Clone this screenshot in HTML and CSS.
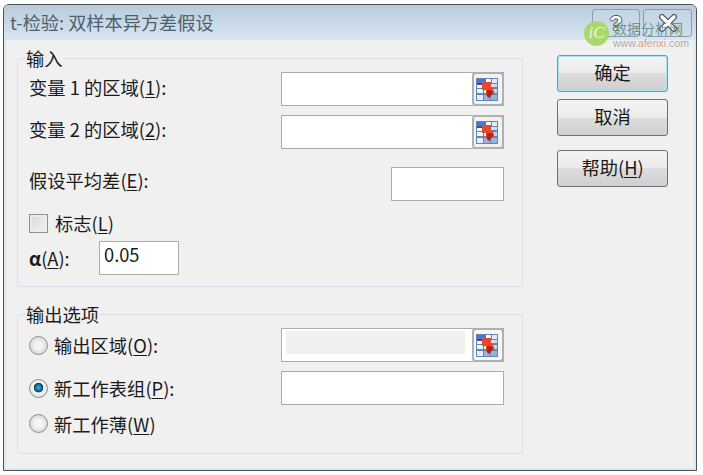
FILE: index.html
```html
<!DOCTYPE html>
<html lang="zh-CN">
<head>
    <meta charset="UTF-8">
    <title>t-检验: 双样本异方差假设</title>
    <link rel="stylesheet" href="styles.css">
</head>
<body>
    <svg class="defs" width="0" height="0">
        <symbol id="range-icon" viewBox="0 0 22 23">
            <rect x="0" y="0" width="22" height="23" fill="#6484b3"/>
            <rect x="1" y="1" width="9" height="4" fill="#4279d6"/>
            <rect x="10" y="1" width="5" height="4" fill="#f6f9fd"/>
            <rect x="16" y="1" width="5" height="4" fill="#e2ecf8"/>
            <rect x="1" y="5" width="6" height="2" fill="#46566e"/>
            <rect x="1" y="7" width="6" height="3" fill="#f2f6fb"/>
            <rect x="8" y="6" width="6" height="4" fill="#f2f6fb"/>
            <rect x="15" y="6" width="6" height="3" fill="#d3e0f1"/>
            <rect x="1" y="11" width="6" height="4" fill="#f2f6fb"/>
            <rect x="8" y="11" width="6" height="4" fill="#e8eff8"/>
            <rect x="15" y="11" width="6" height="4" fill="#c3d5ec"/>
            <rect x="1" y="17" width="6" height="5" fill="#e6eef8"/>
            <rect x="8" y="17" width="6" height="5" fill="#95b4e2"/>
            <rect x="15" y="17" width="6" height="5" fill="#95b4e2"/>
            <path d="M6 4h9v6h2l1 4-5 6-3-3v-5H6z" fill="#e4482f"/>
            <path d="M11 12h3l4 2-5 6-2-2z" fill="#bb2112"/>
        </symbol>
    </svg>

    <div class="dialog">
        <div class="titlebar">
            <span class="title">t-检验: 双样本异方差假设</span>
            <div class="title-btns">
                <span class="title-btn help">?</span>
                <span class="title-btn close">
                    <svg width="20" height="18" viewBox="0 0 20 18">
                        <path d="M4 3l12 12M16 3L4 15" stroke="#4a5560" stroke-width="6" stroke-linecap="round"/>
                        <path d="M4 3l12 12M16 3L4 15" stroke="#fff" stroke-width="3.6" stroke-linecap="round"/>
                    </svg>
                </span>
            </div>
        </div>

        <div class="content">
            <div class="left">
                <fieldset class="group group-input">
                    <legend>输入</legend>
                    <div class="row">
                        <label class="label lift-s">变量 1 的区域(<u>1</u>):</label>
                        <div class="input input-ref">
                            <button class="ref-btn"><svg width="22" height="23"><use href="#range-icon"/></svg></button>
                        </div>
                    </div>
                    <div class="row gap-s">
                        <label class="label lift-m">变量 2 的区域(<u>2</u>):</label>
                        <div class="input input-ref">
                            <button class="ref-btn"><svg width="22" height="23"><use href="#range-icon"/></svg></button>
                        </div>
                    </div>
                    <div class="row gap-l">
                        <label class="label lift-l">假设平均差(<u>E</u>):</label>
                        <div class="input input-short"></div>
                    </div>
                    <div class="row-check">
                        <span class="checkbox"></span>
                        <label>标志(<u>L</u>)</label>
                    </div>
                    <div class="row gap-s">
                        <label class="label label-alpha"><b>α</b>(<u>A</u>):</label>
                        <div class="input input-alpha">0.05</div>
                    </div>
                </fieldset>

                <fieldset class="group group-output">
                    <legend>输出选项</legend>
                    <div class="row">
                        <span class="radio"></span>
                        <label class="label label-radio">输出区域(<u>O</u>):</label>
                        <div class="input input-ref">
                            <div class="disabled-fill"></div>
                            <button class="ref-btn ref-btn-flat"><svg width="22" height="23"><use href="#range-icon"/></svg></button>
                        </div>
                    </div>
                    <div class="row gap-s">
                        <span class="radio checked"></span>
                        <label class="label label-radio">新工作表组(<u>P</u>):</label>
                        <div class="input"></div>
                    </div>
                    <div class="row-last">
                        <span class="radio"></span>
                        <label class="label-radio">新工作薄(<u>W</u>)</label>
                    </div>
                </fieldset>
            </div>

            <div class="actions">
                <button class="btn btn-default">确定</button>
                <button class="btn">取消</button>
                <button class="btn btn-help">帮助(<u>H</u>)</button>
            </div>
        </div>

        <!-- 水印 -->
        <div class="watermark">
            <span class="wm-logo">iC</span>
            <div class="wm-text">
                <span class="wm-name">数据分析网</span>
                <span class="wm-url">www.<b>afenxi</b>.com</span>
            </div>
        </div>
    </div>
</body>
</html>
```

FILE: styles.css
```css
html, body {
    margin: 0;
    padding: 0;
    background-color: #fff;
}

body {
    font-family: "Noto Sans CJK SC", "Liberation Sans", sans-serif;
    font-size: 18.3px;
    color: #1a1a1a;
}

.defs {
    display: block;
    height: 0;
}

u {
    text-underline-offset: 2px;
}

.dialog {
    position: relative;
    box-sizing: border-box;
    width: 694px;
    height: 467px;
    margin: 4px 0 0 3px;
    border: 1px solid #4f5255;
    border-radius: 6px 6px 0 0;
    background-color: #f0f0f0;
    overflow: hidden;
}

/* 标题栏 */
.titlebar {
    display: flex;
    justify-content: space-between;
    box-sizing: border-box;
    height: 35px;
    padding: 4px 4px 0 6px;
    background: linear-gradient(#b9cadb, #d9e6f1);
}

.title {
    font-size: 18.2px;
    line-height: 27px;
    color: #4e5f6c;
}

.title-btns {
    display: flex;
    gap: 3px;
    height: 28px;
}

.title-btn {
    display: flex;
    align-items: center;
    justify-content: center;
    box-sizing: border-box;
    width: 48px;
    height: 28px;
    border: 1px solid #8a9cae;
    border-radius: 3px;
    background: linear-gradient(#c5d4e2, #cfdeeb);
}

.close {
    width: 49px;
}

.help {
    font-family: "Liberation Sans", sans-serif;
    font-size: 21px;
    font-weight: bold;
    color: #fff;
    text-shadow: -1px 0 #4a5560, 1px 0 #4a5560, 0 -1px #4a5560, 0 1px #4a5560;
}

/* 主体 */
.content {
    display: flex;
    box-sizing: border-box;
    height: 430px;
    padding: 9px 0 0 11px;
    border: solid #dbe7f2;
    border-width: 0 2px 2px;
}

.left {
    flex-shrink: 0;
    width: 506px;
}

.group {
    box-sizing: border-box;
    margin: 0;
    padding: 5px 0 0 11px;
    min-width: 0;
    border: 1px solid #d8e0e8;
    border-radius: 3px;
}

.group-input {
    height: 238px;
}

.group-output {
    height: 149px;
    margin-top: 18px;
}

legend {
    margin-left: -3px;
    padding: 0;
    line-height: 18px;
}

.row {
    display: flex;
    align-items: center;
    height: 34px;
}

.gap-s {
    margin-top: 9px;
}

.gap-l {
    margin-top: 18px;
}

.label {
    width: 252px;
    flex-shrink: 0;
    line-height: 22px;
}

.lift-s {
    margin-bottom: 5px;
}

.lift-m {
    margin-bottom: 6px;
}

.lift-l {
    margin-bottom: 8px;
}

.label-alpha {
    width: 70px;
}

.label-radio {
    display: block;
    width: 227px;
    flex-shrink: 0;
    margin-left: 6px;
    line-height: 22px;
}

.input {
    box-sizing: border-box;
    width: 223px;
    height: 34px;
    border: 1px solid #aaadb0;
    background-color: #fff;
}

.input-ref {
    display: flex;
    justify-content: flex-end;
}

.input-short {
    width: 113px;
    margin-left: 110px;
}

.input-alpha {
    width: 80px;
    padding: 0 0 0 4px;
    line-height: 24px;
}

.disabled-fill {
    width: 179px;
    height: 23px;
    margin: 2px 7px 0 0;
    background-color: #f0f0f0;
}

.ref-btn {
    display: flex;
    align-items: center;
    justify-content: center;
    box-sizing: border-box;
    width: 32px;
    height: 34px;
    margin: -1px -1px 0 0;
    padding: 0 2px 0 0;
    border: 2px solid #aeb0b3;
    border-radius: 4px;
    background-color: #f2f2f2;
}

.ref-btn-flat {
    background-color: #f7f7f7;
}

.row-check {
    display: flex;
    align-items: center;
    gap: 7px;
    height: 18px;
    margin-top: 13px;
}

.checkbox {
    box-sizing: border-box;
    width: 19px;
    height: 19px;
    border: 1px solid #8e8f8f;
    background: linear-gradient(135deg, #d9d9d9, #f3f3f3);
    box-shadow: inset 0 0 0 2px #ececec;
}

.radio {
    box-sizing: border-box;
    flex-shrink: 0;
    width: 19px;
    height: 19px;
    border: 1px solid #8e8f8f;
    border-radius: 50%;
    background: radial-gradient(circle, #f4f4f4 30%, #d8d8d8 75%);
}

.radio.checked {
    background: radial-gradient(circle at 50% 45%, #3fb4e8 0, #0f6fa6 24%, #10384f 36%, #f6f6f6 40%, #dcdcdc 80%);
}

.row-last {
    display: flex;
    align-items: center;
    height: 19px;
    margin-top: 9px;
}

/* 右侧按钮 */
.actions {
    display: flex;
    flex-direction: column;
    flex-shrink: 0;
    width: 111px;
    margin-left: 34px;
    padding-top: 6px;
}

.btn {
    box-sizing: border-box;
    width: 111px;
    height: 37px;
    margin-bottom: 7px;
    padding: 0 0 4px;
    border: 1px solid #707070;
    border-radius: 3px;
    font-family: inherit;
    font-size: 18.3px;
    color: #1a1a1a;
    background: linear-gradient(#f3f3f3 0, #ebebeb 50%, #dddddd 50%, #cfcfcf 100%);
}

.btn-default {
    border-color: #22b2e8;
    box-shadow: inset 0 0 0 1px #aee0f5;
}

.btn-help {
    margin-top: 7px;
}

/* 水印 */
.watermark {
    position: absolute;
    top: 16px;
    left: 580px;
    display: flex;
    gap: 4px;
}

.wm-logo {
    width: 25px;
    height: 25px;
    border-radius: 50%;
    background-color: #a9d86c;
    font-family: "Liberation Serif", serif;
    font-style: italic;
    font-size: 17px;
    line-height: 24px;
    text-align: center;
    color: #f0f5e6;
}

.wm-text {
    display: flex;
    flex-direction: column;
    margin-top: -2px;
}

.wm-name {
    font-size: 14px;
    line-height: 18px;
    color: rgba(86, 125, 100, 0.75);
}

.wm-url {
    font-family: "Liberation Sans", sans-serif;
    font-size: 10.5px;
    line-height: 13px;
    color: #a8adb0;
}

.wm-url b {
    font-weight: normal;
    color: #dc9c90;
}
```
